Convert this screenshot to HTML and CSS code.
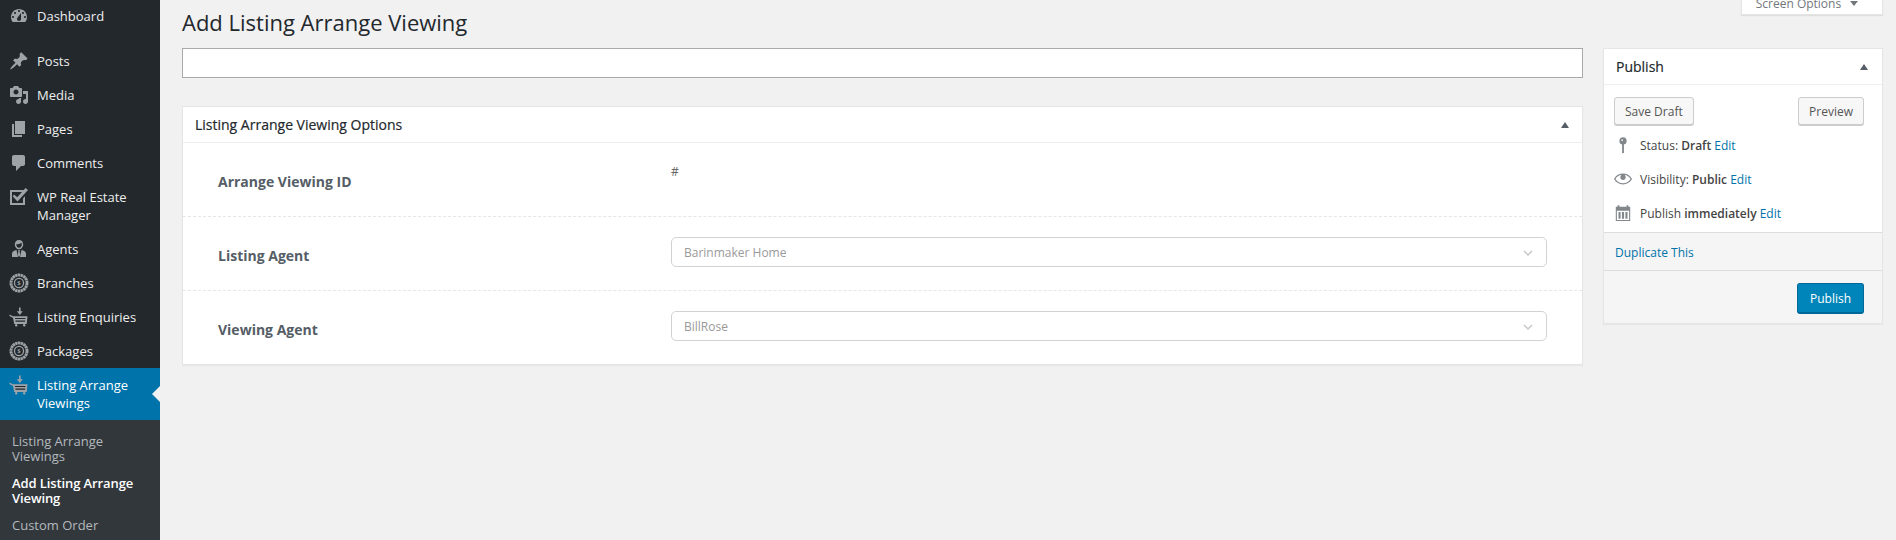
FILE: index.html
```html
<!DOCTYPE html>
<html lang="en">
<head>
<meta charset="UTF-8">
<title>Add Listing Arrange Viewing</title>
<link rel="stylesheet" href="styles.css">
</head>
<body>
<div class="wrapper">
    <!-- side menu -->
    <div class="sidebar">
        <ul class="menu">
            <li class="item gap"><svg class="ico" viewBox="0 0 20 20"><path fill-rule="evenodd" d="M3.760 16h12.480c1.100-1.370 1.760-3.110 1.760-5 0-4.420-3.580-8-8-8s-8 3.580-8 8c0 1.890.66 3.630 1.760 5zM10 4c.55 0 1 .45 1 1s-.45 1-1 1-1-.45-1-1 .45-1 1-1zM6 6c.55 0 1 .45 1 1s-.45 1-1 1-1-.45-1-1 .45-1 1-1zm8 0c.55 0 1 .45 1 1s-.45 1-1 1-1-.45-1-1 .45-1 1-1zm-5.370 5.550L12 7v6c0 1.100-.9 2-2 2s-2-.9-2-2c0-.57.24-1.080.63-1.450zM4 10c.55 0 1 .45 1 1s-.45 1-1 1-1-.45-1-1 .45-1 1-1zm12 0c.55 0 1 .45 1 1s-.45 1-1 1-1-.45-1-1 .45-1 1-1z"/></svg><span>Dashboard</span></li>
            <li class="item"><svg class="ico" viewBox="0 0 20 20"><path d="M10.440 3.020l1.820-1.820 6.360 6.350-1.830 1.820c-1.050-.68-2.480-.57-3.410.36l-.75.75c-.92.93-1.040 2.350-.35 3.410l-1.830 1.820-2.410-2.410-2.800 2.790c-.42.42-3.380 2.710-3.800 2.290s1.860-3.390 2.280-3.810l2.790-2.790L4.100 9.360l1.830-1.820c1.050.69 2.480.57 3.400-.36l.75-.75c.93-.92 1.050-2.350.36-3.410z"/></svg><span>Posts</span></li>
            <li class="item"><svg class="ico" viewBox="0 0 20 20"><path fill-rule="evenodd" d="M13 11V4c0-.55-.45-1-1-1h-1.670L9 1H5L3.670 3H2c-.55 0-1 .45-1 1v7c0 .55.45 1 1 1h10c.55 0 1-.45 1-1zM7 4.500c1.380 0 2.500 1.120 2.500 2.500S8.380 9.500 7 9.500 4.500 8.380 4.500 7 5.620 4.500 7 4.500z"/><path d="M14 6h5v10.500c0 1.380-1.120 2.500-2.500 2.500S14 17.880 14 16.500s1.120-2.500 2.500-2.500c.17 0 .34.02.5.05V9h-3V6zm-4 8.050V13h2v3.500c0 1.380-1.120 2.500-2.500 2.500S7 17.880 7 16.500 8.120 14 9.500 14c.17 0 .34.02.5.05z"/></svg><span>Media</span></li>
            <li class="item"><svg class="ico" viewBox="0 0 20 20"><path d="M6 15V2h10v13H6zm-1 1h8v2H3V5h2v11z"/></svg><span>Pages</span></li>
            <li class="item"><svg class="ico" viewBox="0 0 20 20"><path d="M5 2h9c1.100 0 2 .9 2 2v7c0 1.100-.9 2-2 2h-2l-5 5v-5H5c-1.100 0-2-.9-2-2V4c0-1.100.9-2 2-2z"/></svg><span>Comments</span></li>
            <li class="item"><svg class="ico" viewBox="0 0 20 20"><path fill-rule="evenodd" d="M1 3h14.500v2.200l-1.500 1.600V5H3v11h11v-4.500l2-2.200V18H1z"/><path d="M5 7.500l3.200 2.800L16.600 1 19 3 8.500 14.500 3.800 9.500z"/></svg><span>WP Real Estate Manager</span></li>
            <li class="item"><svg class="ico" viewBox="0 0 20 20"><path fill-rule="evenodd" d="M10 1c2.600 0 4.200 2 4.200 4.400 0 2.500-1.800 4.800-4.200 4.800S5.800 7.900 5.800 5.400C5.800 3 7.400 1 10 1zM7.300 5.300c1.800 0 3.800-.3 5-1.500.4.6.5 1.100.5 1.800 0 1.600-1.200 3.200-2.800 3.200S7.300 7 7.300 5.400z"/><path d="M3 18v-3.500C3 12.500 5 11.500 7.500 11L9 18zM17 18v-3.500c0-2-2-3-4.500-3.500L11 18zM9.200 11h1.600l-.2 1.500.6 3.500-1.200 2-1.200-2 .6-3.500z"/></svg><span>Agents</span></li>
            <li class="item"><svg class="ico" viewBox="0 0 20 20"><use href="#coin"/></svg><span>Branches</span></li>
            <li class="item"><svg class="ico" viewBox="0 0 20 20"><use href="#cart"/></svg><span>Listing Enquiries</span></li>
            <li class="item"><svg class="ico" viewBox="0 0 20 20"><use href="#coin"/></svg><span>Packages</span></li>
            <li class="item current"><svg class="ico" viewBox="0 0 20 20"><use href="#cart"/></svg><span>Listing Arrange Viewings</span></li>
        </ul>
        <ul class="submenu">
            <li>Listing Arrange Viewings</li>
            <li class="on">Add Listing Arrange Viewing</li>
            <li>Custom Order</li>
        </ul>
        <svg class="defs" width="0" height="0"><defs>
            <g id="cart"><path d="M10 .5h1.600v3.800h2.200L10.800 8 7.800 4.300H10zM.5 7.500l3.500 1.800h14.500l-.8 7.700H5.200L4 11 .5 9z"/><path fill="#23282d" d="M6 11h10.500l-.1 1.100H6.200zM6.400 13.600h9.800l-.1 1.100H6.600z"/><circle cx="7.200" cy="18.300" r="1.200"/><circle cx="15.200" cy="18.300" r="1.200"/></g>
            <g id="coin"><circle cx="10" cy="10" r="8" fill="none" stroke="#9ea3a8" stroke-width="3" stroke-dasharray="2.400 .4"/><circle cx="10" cy="10" r="6.200" fill="#23282d"/><circle cx="10" cy="10" r="5.200" fill="#9ea3a8"/><circle cx="10" cy="10" r="3.900" fill="#23282d"/><text class="coin" x="10" y="12.400" text-anchor="middle">$</text></g>
        </defs></svg>
    </div>

    <div class="content">
        <div class="screen-tab">Screen Options <span class="tab-arrow"></span></div>
        <h1 class="title">Add Listing Arrange Viewing</h1>
        <div class="columns">
            <div class="main-col">
                <input class="title-input" type="text">
                <div class="box">
                    <div class="box-head"><span>Listing Arrange Viewing Options</span><i class="caret"></i></div>
                    <div class="row">
                        <div class="label">Arrange Viewing ID</div>
                        <div class="value">#</div>
                    </div>
                    <div class="row">
                        <div class="label">Listing Agent</div>
                        <div class="field"><div class="select"><span>Barinmaker Home</span><svg class="chev" viewBox="0 0 10 6"><path d="M1 1l4 4 4-4"/></svg></div></div>
                    </div>
                    <div class="row last">
                        <div class="label">Viewing Agent</div>
                        <div class="field"><div class="select"><span>BillRose</span><svg class="chev" viewBox="0 0 10 6"><path d="M1 1l4 4 4-4"/></svg></div></div>
                    </div>
                </div>
            </div>

            <div class="side-col">
                <div class="box">
                    <div class="box-head pub-head"><span>Publish</span><i class="caret"></i></div>
                    <div class="pub-body">
                        <div class="pub-btns">
                            <button class="btn">Save Draft</button>
                            <button class="btn">Preview</button>
                        </div>
                        <div class="pub-line"><svg class="pub-ico" viewBox="0 0 20 20"><circle cx="10" cy="5.500" r="4"/><rect x="9" y="8" width="2" height="11"/><circle cx="9" cy="4.500" r="1" fill="#fff"/></svg><span>Status: <b>Draft</b> <a>Edit</a></span></div>
                        <div class="pub-line"><svg class="pub-ico" viewBox="0 0 20 20"><path fill-rule="evenodd" d="M19.700 9.400C17.700 6 14.100 4 10 4S2.300 6 .3 9.400L0 10l.3.6c2 3.400 5.600 5.400 9.700 5.400s7.700-2 9.700-5.400l.3-.6-.3-.6zM10 14.800c-3.400 0-6.500-1.800-8.400-4.800 1.500-2.500 3.900-4.100 6.600-4.600C7.500 6.100 7 7 7 8c0 1.700 1.300 3 3 3s3-1.300 3-3c0-1-.5-1.900-1.200-2.600 2.700.5 5.100 2.100 6.600 4.600-1.900 3-5 4.800-8.400 4.800z"/></svg><span>Visibility: <b>Public</b> <a>Edit</a></span></div>
                        <div class="pub-line"><svg class="pub-ico" viewBox="0 0 20 20"><path fill-rule="evenodd" d="M2 3h2V1.500h2V3h8V1.500h2V3h2v16H2zM3.200 7.500v10.300h13.600V7.500zM5 9h2.300v7.500H5zM8.800 9h2.400v7.500H8.800zM12.700 9H15v7.500h-2.300z"/></svg><span>Publish <b>immediately</b> <a>Edit</a></span></div>
                    </div>
                    <div class="pub-dup"><a>Duplicate This</a></div>
                    <div class="pub-foot"><button class="btn-primary">Publish</button></div>
                </div>
            </div>
        </div>
    </div>
</div>
</body>
</html>
```

FILE: styles.css
```css
*{
    box-sizing: border-box;
}
html,body{
    margin: 0;
    height: 100%;
    overflow: hidden;
}
body{
    background: #f1f1f1;
    font-family: "Open Sans", sans-serif;
    font-size: 13px;
    color: #444;
}
ul{
    list-style: none;
    margin: 0;
    padding: 0;
}
.wrapper{
    display: flex;
    height: 540px;
}

/* side menu */
.sidebar{
    width: 160px;
    flex: none;
    background: #23282d;
    overflow: hidden;
}
.defs{
    display: block;
}
.menu{
    margin-top: -1px;
}
.item{
    display: flex;
    gap: 8px;
    padding: 8px 8px 8px 9px;
    color: #eee;
    font-size: 13px;
    line-height: 18px;
}
.item.gap{
    margin-bottom: 11px;
}
.item.current{
    position: relative;
    background: #0073aa;
    color: #fff;
}
.item.current::after{
    content: "";
    position: absolute;
    right: 0;
    top: 50%;
    margin-top: -8px;
    border: 8px solid transparent;
    border-right-color: #f1f1f1;
    border-left-width: 0;
}
.ico{
    width: 20px;
    height: 20px;
    flex: none;
    fill: #9ea3a8;
    margin: -1px 0;
}
.coin{
    font-size: 6px;
    font-weight: 700;
    fill: #9ea3a8;
}
.submenu{
    background: #32373c;
    padding: 8px 0 6px;
    font-size: 13px;
    line-height: 15px;
    color: #b4b9be;
}
.submenu li{
    padding: 6px 12px;
}
.submenu .on{
    color: #fff;
    font-weight: 600;
    letter-spacing: -.1px;
}

/* content */
.content{
    flex: 1;
    position: relative;
    padding: 0 13px 0 22px;
}
.screen-tab{
    position: absolute;
    top: -12px;
    right: 13px;
    width: 142px;
    height: 27px;
    padding: 6px 10px 0 0;
    text-align: center;
    background: #fff;
    box-shadow: 0 1px 1px rgba(0,0,0,.08);
    border: 1px solid #e5e5e5;
    font-size: 12px;
    color: #72777c;
}
.tab-arrow{
    display: inline-block;
    margin-left: 6px;
    vertical-align: 2px;
    border: 4px solid transparent;
    border-top: 5px solid #72777c;
    border-bottom-width: 0;
}
.title{
    margin: 0;
    padding: 6px 0 0;
    height: 48px;
    font-size: 22px;
    line-height: 32px;
    font-weight: 400;
    color: #23282d;
}
.columns{
    display: grid;
    grid-template-columns: 1401px 280px;
    gap: 20px;
    align-items: start;
}
.title-input{
    display: block;
    width: 100%;
    height: 30px;
    margin: 0 0 28px;
    border: 1px solid #aaa;
    background: #fff;
}
.box{
    background: #fff;
    border: 1px solid #e5e5e5;
    box-shadow: 0 1px 1px rgba(0,0,0,.04);
}
.box-head{
    display: flex;
    justify-content: space-between;
    align-items: center;
    height: 36px;
    padding: 0 12px;
    border-bottom: 1px solid #eee;
    font-size: 14px;
    font-weight: 400;
    color: #23282d;
    -webkit-text-stroke: .2px #23282d;
}
.caret{
    margin-right: 1px;
    border: 4px solid transparent;
    border-bottom: 6px solid #555d66;
    border-top-width: 0;
}
.row{
    display: flex;
    height: 74px;
    border-bottom: 1px dashed #e6e6e6;
}
.row.last{
    border-bottom: 0;
    height: 73px;
}
.label{
    width: 488px;
    flex: none;
    padding: 29px 0 0 35px;
    font-size: 14px;
    line-height: 20px;
    font-weight: 700;
    color: #555d66;
}
.value{
    padding-top: 20px;
    font-size: 12px;
    line-height: 18px;
    color: #666;
}
.field{
    padding-top: 20px;
}
.select{
    display: flex;
    align-items: center;
    justify-content: space-between;
    width: 876px;
    height: 30px;
    padding: 1px 12px 0;
    border: 1px solid #d2d2d2;
    border-radius: 5px;
    font-size: 12px;
    color: #999;
}
.chev{
    width: 10px;
    height: 6px;
    fill: none;
    stroke: #c8c8c8;
    stroke-width: 1.500;
    margin-right: 1px;
}

/* publish box */
.pub-head{
    padding-right: 13px;
}
.pub-body{
    padding: 12px 18px 0 10px;
    height: 147px;
}
.pub-btns{
    display: flex;
    justify-content: space-between;
    margin-bottom: 3px;
}
.btn{
    height: 28px;
    padding: 0 10px;
    font: 12px "Open Sans", sans-serif;
    color: #555;
    background: #f7f7f7;
    border: 1px solid #ccc;
    border-radius: 3px;
    box-shadow: 0 1px 0 #ccc;
}
.pub-line{
    display: flex;
    align-items: center;
    gap: 8px;
    height: 34px;
    font-size: 12px;
}
.pub-line b{
    font-weight: 600;
}
.pub-ico{
    width: 18px;
    height: 18px;
    flex: none;
    fill: #82878c;
}
a{
    color: #0073aa;
}
.pub-dup{
    height: 39px;
    padding: 11px 11px 0;
    background: #f5f5f5;
    border-top: 1px solid #ddd;
    border-bottom: 1px solid #ddd;
    font-size: 12px;
}
.pub-foot{
    display: flex;
    justify-content: flex-end;
    height: 52px;
    padding: 12px 18px 0 0;
    background: #f5f5f5;
}
.btn-primary{
    width: 67px;
    height: 31px;
    font: 12px "Open Sans", sans-serif;
    color: #fff;
    background: #0085ba;
    border: 1px solid #006799;
    border-bottom-width: 2px;
    border-radius: 3px;
}
```
